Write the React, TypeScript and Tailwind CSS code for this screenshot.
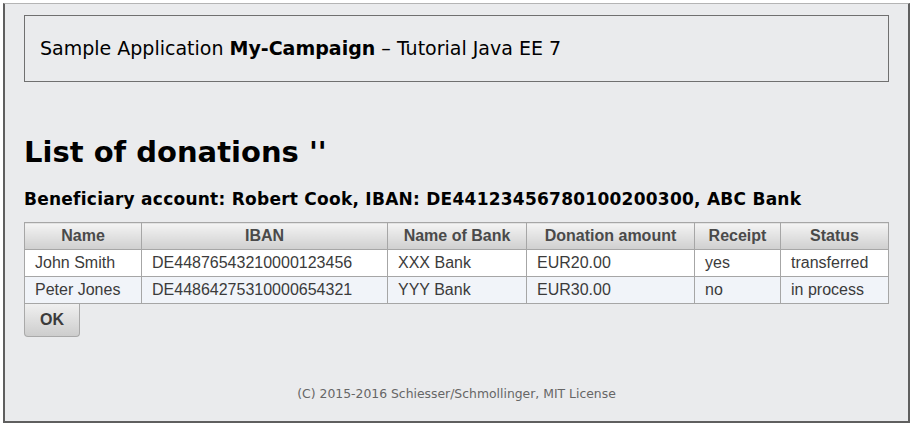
const donations = [
  { name: 'John Smith', iban: 'DE44876543210000123456', bank: 'XXX Bank', amount: 'EUR20.00', receipt: 'yes', status: 'transferred' },
  { name: 'Peter Jones', iban: 'DE44864275310000654321', bank: 'YYY Bank', amount: 'EUR30.00', receipt: 'no', status: 'in process' },
];

const COLUMNS = [
  { label: 'Name', w: 'w-[117px]' },
  { label: 'IBAN', w: 'w-[246px]' },
  { label: 'Name of Bank', w: 'w-[139px]' },
  { label: 'Donation amount', w: 'w-[168px]' },
  { label: 'Receipt', w: 'w-[86px]' },
  { label: 'Status', w: 'w-[108px]' },
];

export default function App() {
  return (
    <div className="w-[912px] h-[425px] bg-white pt-[3px] pl-[3px]">
      <div className="w-[907px] h-[420px] bg-[#eaebed] border-l-2 border-r-2 border-b-2 border-t border-l-[#5f5f5f] border-r-[#5f5f5f] border-b-[#5f5f5f] border-t-[#b4b4b4] pt-[11px] px-[19px] flex flex-col font-['DejaVu_Sans',Verdana,sans-serif] text-black">
        {/* header box */}
        <div className="h-[67px] border border-[#707070] flex items-center pl-[15px] text-[19px] leading-none">
          <span>
            Sample Application <b>My-Campaign</b> – Tutorial Java EE 7
          </span>
        </div>

        <h1 className="mt-[56px] text-[29px] font-bold leading-none">List of donations ''</h1>

        <h3 className="mt-[24px] text-[17px] tracking-[0.25px] font-bold leading-none">
          Beneficiary account: Robert Cook, IBAN: DE44123456780100200300, ABC Bank
        </h3>

        <table className="mt-[14px] w-[865px] border-collapse font-['Liberation_Sans',Arial,sans-serif] text-[16px] text-[#3b3b3b]">
          <thead>
            <tr className="h-[27px]">
              {COLUMNS.map(c => (
                <th
                  key={c.label}
                  className={`${c.w} border border-[#a6a6a6] bg-gradient-to-b from-[#f4f4f4] to-[#cfcfcf] font-bold text-[#4a4a4a] text-center p-0 leading-none`}
                >
                  {c.label}
                </th>
              ))}
            </tr>
          </thead>
          <tbody>
            {donations.map((d, i) => (
              <tr key={d.name} className={`h-[27px] ${i % 2 ? 'bg-[#f1f4f9]' : 'bg-white'}`}>
                {[d.name, d.iban, d.bank, d.amount, d.receipt, d.status].map((v, j) => (
                  <td key={j} className="border border-[#a6a6a6] pl-[10px] py-0 leading-none">
                    {v}
                  </td>
                ))}
              </tr>
            ))}
          </tbody>
        </table>

        <div>
          <button className="w-[56px] h-[33px] border border-[#a9a9a9] border-t-0 rounded-b-[4px] bg-gradient-to-b from-[#f0f0f0] to-[#cdcdcd] font-['Liberation_Sans',Arial,sans-serif] font-bold text-[16px] text-[#3b3b3b]">
            OK
          </button>
        </div>

        <div className="mt-[51px] text-center text-[12.4px] text-[#666] leading-none">
          (C) 2015-2016 Schiesser/Schmollinger, MIT License
        </div>
      </div>
    </div>
  );
}
